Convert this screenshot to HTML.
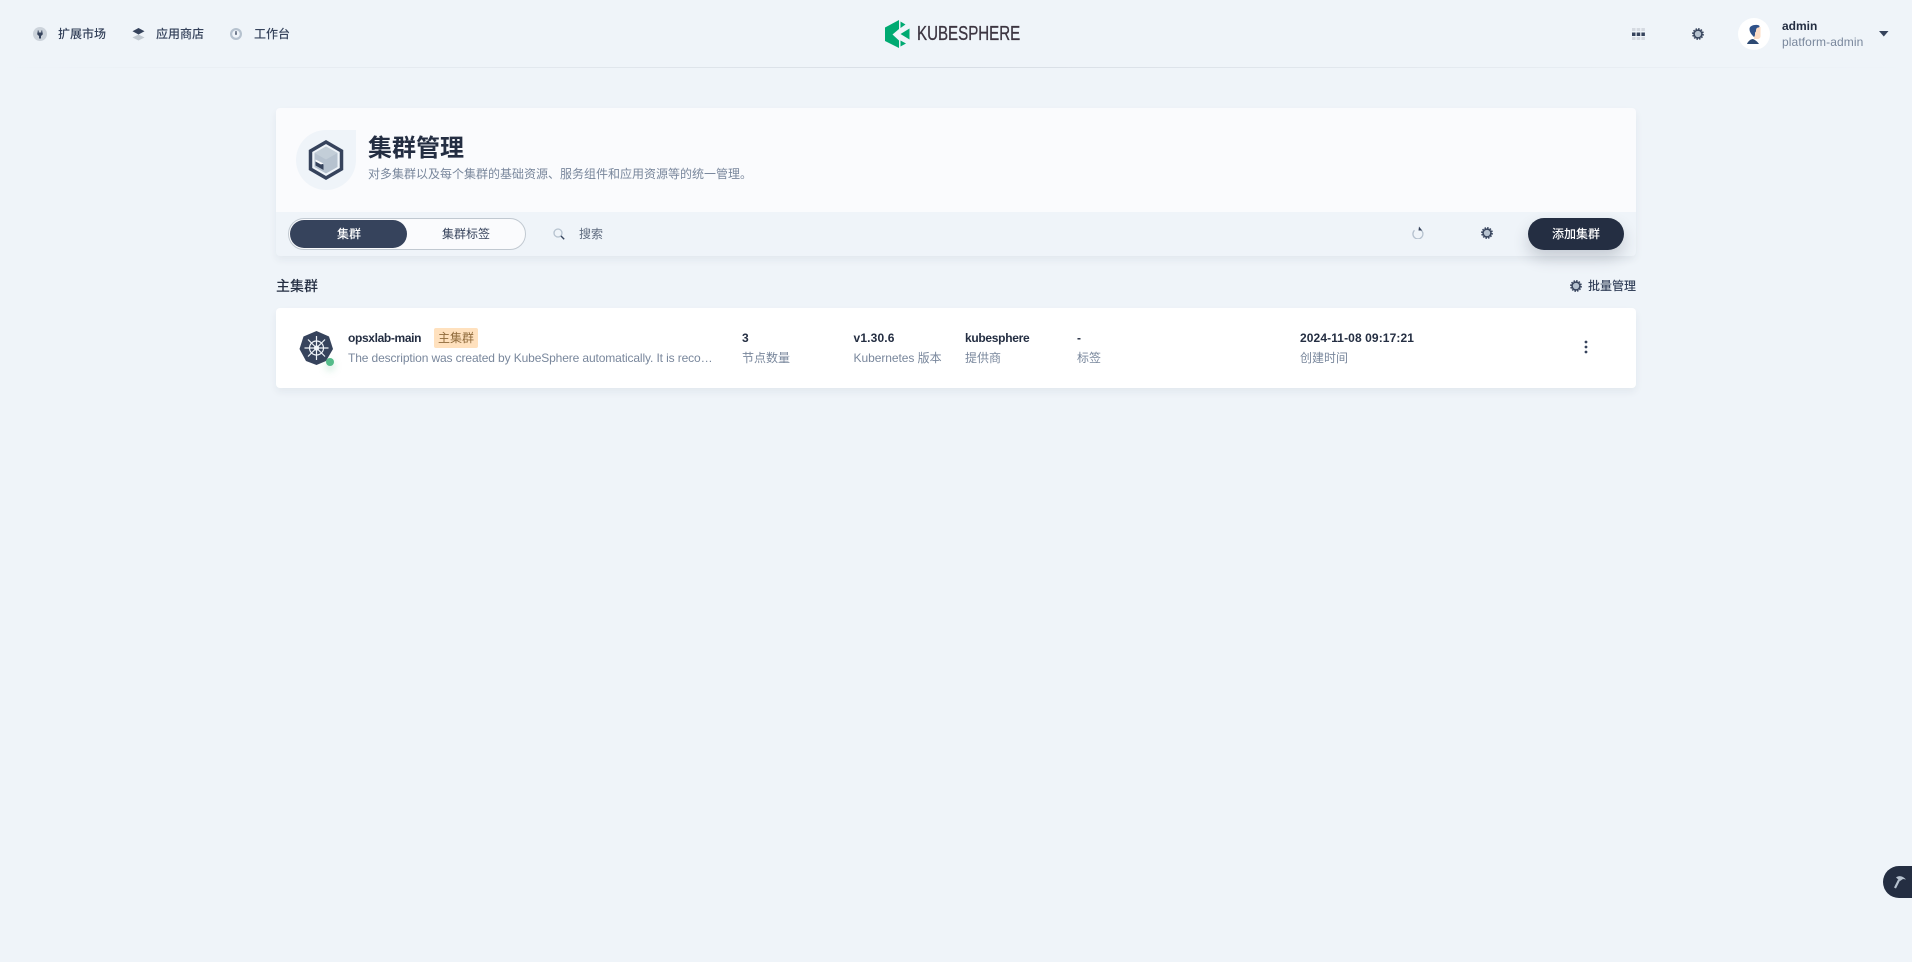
<!DOCTYPE html>
<html lang="zh"><head><meta charset="utf-8"><title>集群管理</title>
<style>
html,body{margin:0;padding:0;width:1912px;height:962px;overflow:hidden;background:#eff4f9;font-family:"Liberation Sans","Noto Sans CJK SC",sans-serif;font-size:12px;color:#242e42}
.a{position:absolute;white-space:nowrap;line-height:20px}
.b{font-weight:700}
.m{font-weight:500}
.g{color:#79879c}
svg{position:absolute;display:block}
</style></head><body>
<svg width="0" height="0"><defs>
<symbol id="gear" viewBox="0 0 16 16"><circle cx="8" cy="8" r="4.2" fill="#b6c2cf"/><circle cx="8" cy="8" r="5.2" fill="none" stroke="#36435c" stroke-width="2"/><circle cx="8" cy="8" r="6.900" fill="none" stroke="#36435c" stroke-width="1.800" stroke-dasharray="2.2 1.4"/></symbol>
</defs></svg>

<!-- header -->
<div style="position:absolute;left:0;top:67px;width:1912px;height:1px;background:linear-gradient(90deg,rgba(209,215,224,0),#d8dee5 50%,rgba(209,215,224,0))"></div>
<svg style="left:33px;top:27px" width="14" height="14" viewBox="0 0 14 14"><circle cx="7" cy="7" r="7" fill="#ccd3db"/><path d="M4.700 3.500h1v2h2.600v-2h1v2h.4v2L8 9v2.500H6V9L4.300 7.500v-2h.4z" fill="#36435c"/></svg>
<div class="a m" style="left:58px;top:24px;color:#36435c">扩展市场</div>
<svg style="left:132px;top:27px" width="13" height="14" viewBox="0 0 13 14"><path d="M6.500 7.500L.5 10.500l6 3 6-3z" fill="#c1c9d1"/><path d="M6.500 1L.5 4.200l6 3.300 6-3.300z" fill="#36435c"/></svg>
<div class="a m" style="left:156px;top:24px;color:#36435c">应用商店</div>
<svg style="left:230px;top:28px" width="12" height="12" viewBox="0 0 12 12"><circle cx="6" cy="6" r="6" fill="#b6c2cf"/><circle cx="6" cy="6" r="3.800" fill="#eff4f9"/><path d="M5.500 3h1l.3 3.800H5.200z" fill="#36435c"/></svg>
<div class="a m" style="left:254px;top:24px;color:#36435c">工作台</div>

<svg style="left:885px;top:20px" width="25" height="28" viewBox="0 0 25 28"><path d="M14 0L0 7.500V21l14 7v-7.500L7.500 14.500 14 9z" fill="#00aa72"/><path d="M15.500 1.500L20.500 4.500 15.500 8zM24.500 8.500V19.500L15.500 14zM15.500 20.500L21 23.500 15.500 26.500z" fill="#00aa72"/></svg>
<div class="a" style="left:917px;top:23px;font-size:20px;line-height:22px;color:#3c3541;transform:scaleX(.755);transform-origin:0 0;-webkit-text-stroke:.3px #3c3541">KUBESPHERE</div>

<svg style="left:1632px;top:28px" width="13" height="13" viewBox="0 0 13 13"><g fill="#d5dae1"><rect x="0" y="0" width="3.500" height="3"/><rect x="4.700" y="0" width="3.500" height="3"/><rect x="9.400" y="0" width="3.500" height="3"/><rect x="0" y="9" width="3.500" height="3"/><rect x="4.700" y="9" width="3.500" height="3"/><rect x="9.400" y="9" width="3.500" height="3"/></g><g fill="#36435c"><rect x="0" y="4.500" width="3.500" height="3.500"/><rect x="4.700" y="4.500" width="3.500" height="3.500"/><rect x="9.400" y="4.500" width="3.500" height="3.500"/></g></svg>
<svg style="left:1692px;top:28px" width="12" height="12"><use href="#gear" width="12" height="12"/></svg>

<div style="position:absolute;left:1738px;top:18px;width:32px;height:32px;border-radius:50%;background:#fff"></div>
<svg style="left:1746px;top:24px" width="18" height="21" viewBox="0 0 18 21"><path d="M8 3h6.500v9c0 2-1.500 3-3 3H8z" fill="#fcdcc6"/><path d="M3.500 5c0-3 4-4.500 8-4 2 .2 3 1.500 1 2.500-2 0-2.500 1.500-2.500 3.500 0 1-1 1-1 2 0 2 0 3-1 4-2-2-4.500-4.500-4.500-8z" fill="#2f5189"/><path d="M1 20c1-3 4-5 6-5 2 1 4 2 6 5z" fill="#2e4a73"/></svg>
<div class="a b" style="left:1782px;top:16px;color:#242e42">admin</div>
<div class="a g" style="left:1782px;top:32px;letter-spacing:.1px">platform-admin</div>
<svg style="left:1879px;top:31px" width="10" height="6" viewBox="0 0 10 6"><path d="M0 0h9.500L4.800 5.500z" fill="#36435c"/></svg>

<!-- banner -->
<div style="position:absolute;left:276px;top:108px;width:1360px;height:148px;background:#eff4f9;border-radius:4px;box-shadow:0 4px 8px 0 rgba(36,46,66,.06);overflow:hidden"><div style="height:104px;background:#fafbfd"></div></div>
<div style="position:absolute;left:296px;top:130px;width:60px;height:60px;background:#eff4f9;border-radius:50% 0 50% 50%"></div>
<svg style="left:307px;top:139px" width="38" height="42" viewBox="0 0 38 42"><path d="M19 3L34.500 12V30L19 39 3.500 30V12z" fill="none" stroke="#36435c" stroke-width="3.500"/><path d="M19 7.500L30.500 14V28L19 34.500 7.500 28V14z" fill="#b6c2cf"/><path d="M19 7.500L30.500 14 19 20.500 7.500 14z" fill="#c3ced8"/><path d="M8.500 21.500l8 4V31l-8-4.500z" fill="#36435c"/><path d="M8.500 20.500l8 4-2.500 1-5.500-3z" fill="#fafbfd"/></svg>
<div class="a b" style="left:368px;top:137px;font-size:24px;line-height:24px;color:#242e42">集群管理</div>
<div class="a g" style="left:368px;top:164px">对多集群以及每个集群的基础资源、服务组件和应用资源等的统一管理。</div>

<div style="position:absolute;left:288px;top:218px;width:236px;height:30px;border:1px solid #c1c9d1;border-radius:16px;background:#fafbfd"></div>
<div style="position:absolute;left:290px;top:220px;width:117px;height:28px;border-radius:14px;background:#36435c"></div>
<div class="a m" style="left:337px;top:224px;color:#fff">集群</div>
<div class="a" style="left:442px;top:224px;color:#36435c">集群标签</div>
<svg style="left:553px;top:228px" width="12" height="12" viewBox="0 0 12 12"><circle cx="5" cy="5" r="4" fill="none" stroke="#b6c2cf" stroke-width="1.300"/><path d="M8 8l3.200 3.200" stroke="#36435c" stroke-width="1.400"/></svg>
<div class="a" style="left:579px;top:224px;color:#5f6b7f">搜索</div>
<svg style="left:1411px;top:226px" width="13" height="13" viewBox="0 0 13 13"><path d="M9.500 3.200A5 5 0 1 1 3 3.500" fill="none" stroke="#b6c2cf" stroke-width="1.300" transform="translate(.5 .8)"/><path d="M8 0.500l3.200 4H7.500z" fill="#36435c"/></svg>
<svg style="left:1481px;top:227px" width="12" height="12"><use href="#gear" width="12" height="12"/></svg>
<div class="m" style="position:absolute;left:1528px;top:218px;width:96px;height:32px;border-radius:16px;background:#242e42;box-shadow:0 8px 16px 0 rgba(36,46,66,.2);color:#fff;text-align:center;line-height:32px">添加集群</div>

<!-- section -->
<div class="a m" style="left:276px;top:276px;font-size:14px;color:#242e42">主集群</div>
<svg style="left:1570px;top:280px" width="12" height="12"><use href="#gear" width="12" height="12"/></svg>
<div class="a m" style="left:1588px;top:276px;color:#36435c">批量管理</div>

<!-- card -->
<div style="position:absolute;left:276px;top:308px;width:1360px;height:80px;background:#fff;border-radius:4px;box-shadow:0 4px 8px 0 rgba(36,46,66,.06)"></div>
<svg style="left:299px;top:330px" width="35" height="36" viewBox="0 0 35 36"><path d="M17.500 1L30 6.500 34 19 27 31l-9.500 4L7 31 .5 19 4.500 6.500z" fill="#36435c"/><g stroke="#eff4f9" stroke-width="1.200" fill="none"><circle cx="17.500" cy="18" r="7"/><circle cx="17.500" cy="18" r="2"/><path d="M17.500 6v24M5.500 18h24M9 9.500l17 17M26 9.500L9 26.500"/></g></svg>
<div style="position:absolute;left:326px;top:358px;width:8px;height:8px;border-radius:50%;background:#55bc8a;box-shadow:0 4px 8px rgba(85,188,138,.36)"></div>
<div class="a b" style="left:348px;top:328px;color:#242e42;letter-spacing:-.35px">opsxlab-main</div>
<div style="position:absolute;left:434px;top:328px;width:44px;height:20px;background:#ffe1be;border-radius:2px;color:#8f6a3b;text-align:center;line-height:20px">主集群</div>
<div class="a g" style="left:348px;top:348px;width:367px;overflow:hidden;text-overflow:ellipsis;letter-spacing:-.12px">The description was created by KubeSphere automatically. It is recommended</div>

<div class="a b" style="left:742px;top:328px">3</div><div class="a g" style="left:742px;top:348px">节点数量</div>
<div class="a b" style="left:853.500px;top:328px;letter-spacing:.15px">v1.30.6</div><div class="a g" style="left:853.500px;top:348px;letter-spacing:-.05px">Kubernetes 版本</div>
<div class="a b" style="left:965px;top:328px;letter-spacing:-.3px">kubesphere</div><div class="a g" style="left:965px;top:348px">提供商</div>
<div class="a b" style="left:1077px;top:328px">-</div><div class="a g" style="left:1077px;top:348px">标签</div>
<div class="a b" style="left:1300px;top:328px;letter-spacing:.1px">2024-11-08 09:17:21</div><div class="a g" style="left:1300px;top:348px">创建时间</div>
<svg style="left:1584px;top:340px" width="4" height="14" viewBox="0 0 4 14"><circle cx="2" cy="2" r="1.400" fill="#36435c"/><circle cx="2" cy="7" r="1.400" fill="#36435c"/><circle cx="2" cy="12" r="1.400" fill="#36435c"/></svg>

<!-- tool -->
<div style="position:absolute;left:1883px;top:866px;width:29px;height:32px;background:#242e42;border-radius:16px 0 0 16px"></div>
<svg style="left:1893px;top:875px" width="14" height="14" viewBox="0 0 14 14"><path d="M6 5L2 13" stroke="#b6c2cf" stroke-width="2.200"/><path d="M3 2.500C6 0 10 1 13 4.500L10 4 7 6z" fill="#b6c2cf"/></svg>
</body></html>
